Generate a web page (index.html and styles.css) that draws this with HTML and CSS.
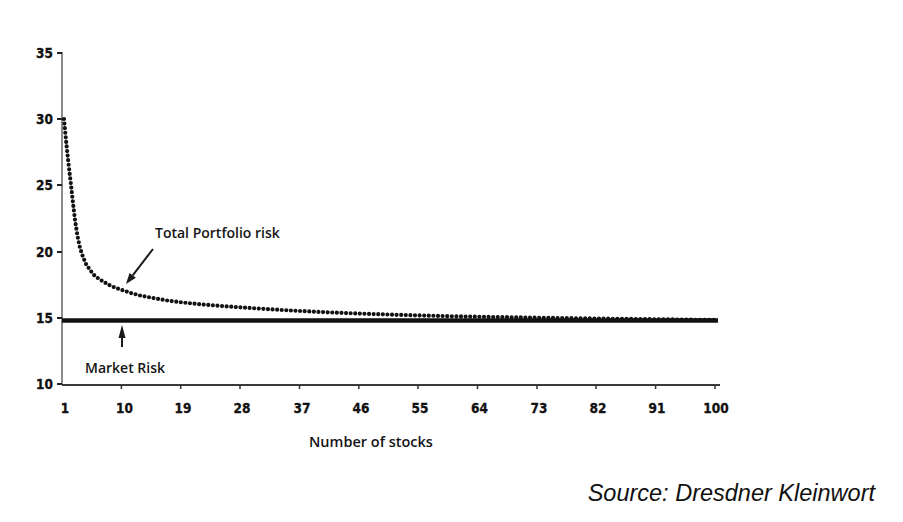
FILE: index.html
```html
<!DOCTYPE html>
<html lang="en">
<head>
<meta charset="utf-8">
<title>Total Portfolio risk vs Number of stocks</title>
<link rel="stylesheet" href="styles.css">
</head>
<body>
<main class="page">
  <svg class="chart" width="903" height="480" viewBox="0 0 903 480" xmlns="http://www.w3.org/2000/svg">
    <g class="axis-y">
      <line x1="62" y1="52" x2="62" y2="385"/>
    </g>
    <g class="ticks-y">
      <line x1="57" y1="53" x2="62" y2="53"/>
      <line x1="57" y1="119" x2="62" y2="119"/>
      <line x1="57" y1="185" x2="62" y2="185"/>
      <line x1="57" y1="252" x2="62" y2="252"/>
      <line x1="57" y1="318" x2="62" y2="318"/>
      <line x1="57" y1="384" x2="62" y2="384"/>
    </g>
    <g class="labels-y">
      <text x="53" y="58">35</text>
      <text x="53" y="124">30</text>
      <text x="53" y="190">25</text>
      <text x="53" y="257">20</text>
      <text x="53" y="323">15</text>
      <text x="53" y="389">10</text>
    </g>
    <line class="axis-x" x1="62" y1="385" x2="720" y2="385"/>
    <g class="ticks-x">
      <line x1="121.4" y1="385" x2="121.4" y2="389"/>
      <line x1="180.7" y1="385" x2="180.7" y2="389"/>
      <line x1="240" y1="385" x2="240" y2="389"/>
      <line x1="299.5" y1="385" x2="299.5" y2="389"/>
      <line x1="358.8" y1="385" x2="358.8" y2="389"/>
      <line x1="418" y1="385" x2="418" y2="389"/>
      <line x1="477.5" y1="385" x2="477.5" y2="389"/>
      <line x1="537" y1="385" x2="537" y2="389"/>
      <line x1="596" y1="385" x2="596" y2="389"/>
      <line x1="655.6" y1="385" x2="655.6" y2="389"/>
      <line x1="715" y1="385" x2="715" y2="389"/>
    </g>
    <g class="labels-x">
      <text x="65" y="413">1</text>
      <text x="124.5" y="413">10</text>
      <text x="183" y="413">19</text>
      <text x="242" y="413">28</text>
      <text x="302" y="413">37</text>
      <text x="361" y="413">46</text>
      <text x="420" y="413">55</text>
      <text x="479.5" y="413">64</text>
      <text x="539" y="413">73</text>
      <text x="598" y="413">82</text>
      <text x="657" y="413">91</text>
      <text x="716" y="413">100</text>
    </g>
    <line class="market" x1="62" y1="320.5" x2="718" y2="320.5"/>
    <polyline class="portfolio" points="64,119 65.5,135 67,150 69,168 71,185 73,203 75,220 77.5,236 80,248 83,257 86,264 90,270 94,275 99,279 104,282 110,285.5 116,288 122,290 131,293 140,295.5 153,298 167,300.5 183,302.5 200,304.3 225,306.3 250,308 285,310.2 320,312 360,313.6 400,314.9 450,316.2 500,317.1 550,317.9 600,318.6 660,319.3 717,320"/>
    <g class="arrow">
      <line x1="153" y1="249" x2="132.7" y2="275.3"/>
      <polygon points="126,284 135.9,277.7 129.5,272.9"/>
      <line x1="122" y1="336" x2="122" y2="347"/>
      <polygon points="122,325 125.5,338 118.5,338"/>
    </g>
    <text class="note" x="155" y="238">Total Portfolio risk</text>
    <text class="note" x="85" y="373">Market Risk</text>
    <text class="title-x" x="309" y="447">Number of stocks</text>
  </svg>
  <p class="source">Source: Dresdner Kleinwort</p>
</main>
</body>
</html>
```

FILE: styles.css
```css
html, body {
  margin: 0;
  padding: 0;
  background: #ffffff;
}

.page {
  width: 903px;
  height: 522px;
  overflow: hidden;
  display: flex;
  flex-direction: column;
}

.chart {
  display: block;
  flex: none;
}

.axis-y line {
  stroke: #8c8c8c;
  stroke-width: 2;
}

.ticks-y line {
  stroke: #222;
  stroke-width: 2;
}

.axis-x {
  stroke: #3a3a3a;
  stroke-width: 2.2;
}

.ticks-x line {
  stroke: #333;
  stroke-width: 1.5;
}

.labels-y text,
.labels-x text {
  font-family: "DejaVu Sans Condensed", "DejaVu Sans", sans-serif;
  font-weight: bold;
  font-size: 13.5px;
  fill: #111;
  stroke: #111;
  stroke-width: 0.3;
}

.labels-y text {
  text-anchor: end;
}

.labels-x text {
  text-anchor: middle;
}

.market {
  stroke: #111;
  stroke-width: 4.5;
}

.portfolio {
  fill: none;
  stroke: #121212;
  stroke-width: 4.2;
  stroke-linecap: round;
  stroke-linejoin: round;
  stroke-dasharray: 0 4.6;
}

.arrow line {
  stroke: #1a1a1a;
  stroke-width: 2;
}

.arrow polygon {
  fill: #1a1a1a;
}

.note {
  font-family: "Open Sans", "DejaVu Sans", sans-serif;
  font-weight: 600;
  font-size: 14px;
  fill: #151515;
}

.title-x {
  font-family: "Open Sans", "DejaVu Sans", sans-serif;
  font-weight: 600;
  font-size: 14.5px;
  fill: #151515;
}

.source {
  margin: 0;
  padding-right: 28px;
  text-align: right;
  font-family: "Liberation Sans", Arial, sans-serif;
  font-style: italic;
  font-size: 23.5px;
  line-height: 26px;
  color: #111;
}
```
